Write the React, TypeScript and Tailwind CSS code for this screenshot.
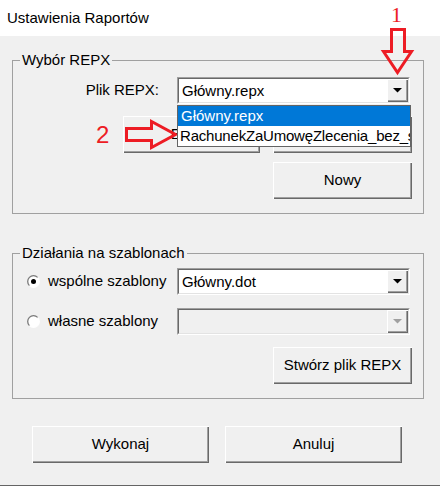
import React from "react";

const raised =
  "bg-[#f0f0f0] shadow-[inset_1px_1px_#ffffff,inset_-1px_-1px_#696969,inset_-2px_-2px_#a0a0a0]";

const DropArrow = ({ disabled }: { disabled?: boolean }) => (
  <div className={`flex h-full w-[21px] items-center justify-center ${raised}`}>
    <svg width="9" height="5" viewBox="0 0 9 5">
      <polygon points="0,0 9,0 4.5,4.5" fill={disabled ? "#a0a0a0" : "#000000"} />
    </svg>
  </div>
);

const Combo = ({ value, disabled }: { value?: string; disabled?: boolean }) => (
  <div className="flex h-[27px] w-[233px] border border-t-[#a0a0a0] border-l-[#a0a0a0] border-r-white border-b-white">
    <div
      className={`flex flex-1 border border-t-[#696969] border-l-[#696969] border-r-[#e3e3e3] border-b-[#e3e3e3] ${
        disabled ? "bg-[#f0f0f0]" : "bg-white"
      }`}
    >
      <span className="flex-1 pl-[3px] leading-[23px]">{value}</span>
      <DropArrow disabled={disabled} />
    </div>
  </div>
);

const Button = ({ children, className }: { children?: React.ReactNode; className: string }) => (
  <button className={`h-[37px] text-[15px] text-black ${raised} ${className}`}>{children}</button>
);

const Radio = ({ checked }: { checked?: boolean }) => (
  <svg width="13" height="13" viewBox="0 0 13 13">
    <defs>
      <linearGradient id="rg" x1="0" y1="0" x2="1" y2="1">
        <stop offset="0.45" stopColor="#7a7a7a" />
        <stop offset="0.55" stopColor="#ffffff" />
      </linearGradient>
    </defs>
    <circle cx="6.5" cy="6.5" r="5.8" fill="#ffffff" stroke="url(#rg)" strokeWidth="1.3" />
    {checked && <circle cx="6.5" cy="6.5" r="2.5" fill="#000000" />}
  </svg>
);

const GroupBox = ({
  label,
  className,
  children,
}: {
  label: string;
  className: string;
  children: React.ReactNode;
}) => (
  <div className={`relative w-[412px] border border-[#a0a0a0] ${className}`}>
    <span className="absolute left-[7px] top-[-11px] bg-[#f0f0f0] px-[2px] leading-[20px]">{label}</span>
    {children}
  </div>
);

export default function App() {
  return (
    <div className="relative flex h-[486px] w-[440px] flex-col overflow-hidden border-b border-[#646464] bg-[#f0f0f0] font-['Liberation_Sans',Arial,sans-serif] text-[15px] text-black">
      <div className="flex h-[36px] shrink-0 items-center bg-white pl-[7px]">Ustawienia Raportów</div>

      <GroupBox label="Wybór REPX" className="ml-[12px] mt-[24px] h-[154px]">
        <div className="mt-[16px] flex items-center justify-end gap-[18px] pr-[13px]">
          <span>Plik REPX:</span>
          <div className="relative">
            <Combo value="Główny.repx" />
            {/* open dropdown list */}
            <div className="absolute left-0 top-[28px] z-10 w-[234px] overflow-hidden border border-[#646464] bg-white">
              <div className="h-[20px] whitespace-nowrap bg-[#0078d7] pl-[3px] leading-[20px] text-white">Główny.repx</div>
              <div className="h-[20px] whitespace-nowrap pl-[2px] leading-[20px] tracking-[-0.2px]">
                RachunekZaUmowęZlecenia_bez_s
              </div>
            </div>
          </div>
        </div>
        <div className="mt-[12px] flex justify-end gap-[13px] pr-[11px]">
          <Button className="w-[137px]">Edytuj</Button>
          <Button className="w-[139px]" />
        </div>
        <div className="mt-[9px] flex justify-end pr-[11px]">
          <Button className="w-[139px]">Nowy</Button>
        </div>
      </GroupBox>

      <GroupBox label="Działania na szablonach" className="ml-[12px] mt-[39px] h-[146px]">
        <div className="mt-[14px] flex items-center pr-[13px]">
          <div className="ml-[14px] flex">
            <Radio checked />
          </div>
          <span className="ml-[8px]">wspólne szablony</span>
          <div className="ml-auto">
            <Combo value="Główny.dot" />
          </div>
        </div>
        <div className="mt-[13px] flex items-center pr-[13px]">
          <div className="ml-[14px] flex">
            <Radio />
          </div>
          <span className="ml-[8px]">własne szablony</span>
          <div className="ml-auto">
            <Combo disabled />
          </div>
        </div>
        <div className="mt-[12px] flex justify-end pr-[11px]">
          <Button className="w-[139px]">Stwórz plik REPX</Button>
        </div>
      </GroupBox>

      <div className="mt-[27px] flex gap-[16px] pl-[32px]">
        <Button className="w-[177px]">Wykonaj</Button>
        <Button className="w-[177px]">Anuluj</Button>
      </div>

      {/* red annotations */}
      <span className="absolute left-[391px] top-[4px] font-['Liberation_Serif',serif] text-[22px] leading-none text-[#ed1c24]">
        1
      </span>
      <span className="absolute left-[96px] top-[123px] font-['Liberation_Sans',sans-serif] text-[24px] leading-none text-[#ed1c24]">
        2
      </span>
      <svg className="pointer-events-none absolute left-0 top-0" width="440" height="486" viewBox="0 0 440 486">
        <polygon
          points="391.5,29.5 404.5,29.5 404.5,51.5 411.5,51.5 397.5,72.5 383.5,51.5 391.5,51.5"
          fill="none"
          stroke="#ed1c24"
          strokeWidth="3"
          strokeLinejoin="miter"
        />
        <polygon
          points="126.5,128.5 151.5,128.5 151.5,121.5 175.5,134.5 151.5,147.5 151.5,140.5 126.5,140.5"
          fill="none"
          stroke="#ed1c24"
          strokeWidth="3"
          strokeLinejoin="miter"
        />
      </svg>
    </div>
  );
}
